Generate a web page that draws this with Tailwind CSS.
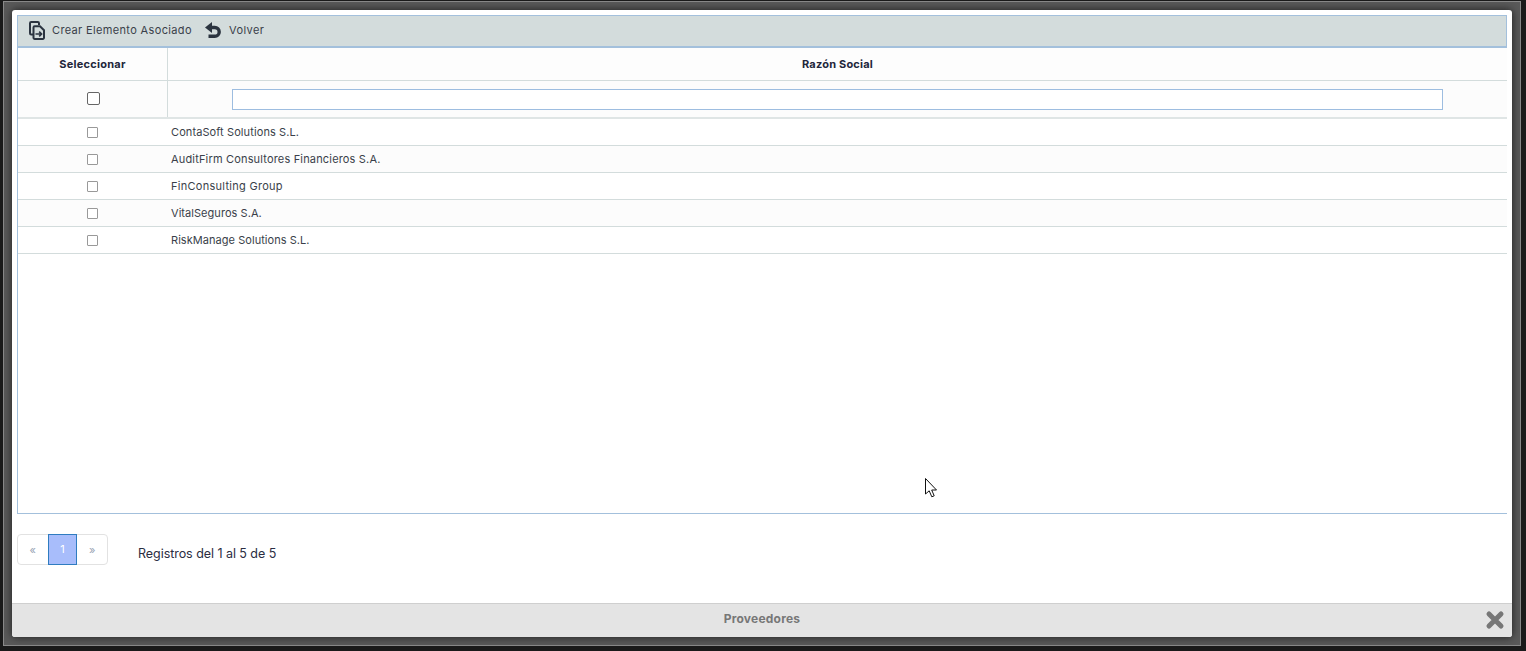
<!DOCTYPE html>
<html lang="es">
<head>
    <meta charset="UTF-8">
    <title>Proveedores</title>
    <script src="https://cdn.jsdelivr.net/npm/@tailwindcss/browser@4"></script>
</head>
<body class="bg-[#1a1a1a] overflow-hidden font-['Inter','Open_Sans',sans-serif] text-[#2b2d42]">
    <!-- Window frame -->
    <div class="ml-[3px] mt-[1px] w-[1518px] h-[645px] bg-[#5a5a5a] border border-[#8a8a8a] pl-[8px] pt-[8px]">
        <!-- Modal -->
        <div class="w-[1500px] h-[627px] bg-white rounded-[3px] shadow-[0_0_8px_#1c1c1c] flex flex-col">
            <div class="pl-[5px] pt-[5px] pr-[5px] h-[593px] flex flex-col">
                <!-- Toolbar -->
                <div class="h-[33px] shrink-0 bg-[#d3dcdc] border border-b-2 border-[#a3c0dc] flex items-center pl-[11px] pb-[2px] text-[11px] text-[#3a3f4a]">
                    <svg class="w-[16px] h-[19px] mr-[7px]" viewBox="0 0 16 19" fill="none" stroke="#2b3440" stroke-width="2">
                        <path d="M10 4V2.200A1.200 1.200 0 0 0 8.800 1H2.200A1.200 1.200 0 0 0 1 2.200v10A1.200 1.200 0 0 0 2.200 13.400H4.500"/>
                        <path d="M4.500 6.400A1.200 1.200 0 0 1 5.700 5.200H11l4 4v7.600a1.200 1.200 0 0 1-1.200 1.200H5.700a1.200 1.200 0 0 1-1.200-1.200Z"/>
                        <path d="M6.500 13h6M10.200 10.600L12.600 13l-2.400 2.400" stroke-width="1.600"/>
                    </svg>
                    <span class="w-[153px] tracking-[0.35px]">Crear Elemento Asociado</span>
                    <svg class="w-[16px] h-[17px] mr-[8px]" viewBox="0 0 16 17" fill="none" stroke="#2b3440">
                        <path d="M5 5.500H9.800a4.400 4.400 0 0 1 0 8.800H3.500" stroke-width="3.400"/>
                        <path d="M7 0V11L0 5.500Z" fill="#2b3440" stroke="none"/>
                    </svg>
                    <span class="tracking-[0.4px]">Volver</span>
                </div>
                <!-- Grid -->
                <div class="flex-1 border-l border-b border-[#a3c0dc]">
                    <div class="grid grid-cols-[150px_1fr] h-[33px] bg-[#fdfdfd] border-b border-[#d3dcdc] text-[11px] font-bold text-[#22263a] items-center text-center">
                        <div class="h-full border-r border-[#d3dcdc] flex items-center justify-center tracking-[0.25px]">Seleccionar</div>
                        <div class="tracking-[0.2px]">Razón Social</div>
                    </div>
                    <div class="grid grid-cols-[150px_1fr] h-[38px] bg-[#fcfcfc] border-b-2 border-[#dfe5e5]">
                        <div class="border-r border-[#d3dcdc] flex items-center justify-center pb-[2px] pl-[2px]">
                            <input type="checkbox" class="appearance-none w-[13px] h-[13px] bg-white border border-[#666] rounded-[2px]">
                        </div>
                        <div class="pl-[64px] pt-[8px]">
                            <input type="text" class="block w-[1211px] h-[21px] bg-white border border-[#9dbde0]">
                        </div>
                    </div>
                    <div id="rows" class="text-[11px] text-[#3a3f4a]">
                        <div class="grid grid-cols-[150px_1fr] h-[27px] bg-white border-b border-[#d3dcdc] items-center">
                            <div class="flex justify-center pr-[2px]"><span class="w-[11px] h-[11px] bg-white border border-[#999] rounded-[1px]"></span></div>
                            <div class="pl-[3px] tracking-[0.1px]">ContaSoft Solutions S.L.</div>
                        </div>
                        <div class="grid grid-cols-[150px_1fr] h-[27px] bg-[#fcfcfc] border-b border-[#d3dcdc] items-center">
                            <div class="flex justify-center pr-[2px]"><span class="w-[11px] h-[11px] bg-white border border-[#999] rounded-[1px]"></span></div>
                            <div class="pl-[3px] tracking-[0.17px]">AuditFirm Consultores Financieros S.A.</div>
                        </div>
                        <div class="grid grid-cols-[150px_1fr] h-[27px] bg-white border-b border-[#d3dcdc] items-center">
                            <div class="flex justify-center pr-[2px]"><span class="w-[11px] h-[11px] bg-white border border-[#999] rounded-[1px]"></span></div>
                            <div class="pl-[3px] tracking-[0.28px]">FinConsulting Group</div>
                        </div>
                        <div class="grid grid-cols-[150px_1fr] h-[27px] bg-[#fcfcfc] border-b border-[#d3dcdc] items-center">
                            <div class="flex justify-center pr-[2px]"><span class="w-[11px] h-[11px] bg-white border border-[#999] rounded-[1px]"></span></div>
                            <div class="pl-[3px] tracking-[0.05px]">VitalSeguros S.A.</div>
                        </div>
                        <div class="grid grid-cols-[150px_1fr] h-[27px] bg-white border-b border-[#d3dcdc] items-center">
                            <div class="flex justify-center pr-[2px]"><span class="w-[11px] h-[11px] bg-white border border-[#999] rounded-[1px]"></span></div>
                            <div class="pl-[3px] tracking-[0.05px]">RiskManage Solutions S.L.</div>
                        </div>
                    </div>
                </div>
                <!-- Pagination -->
                <div class="h-[89px] shrink-0 pt-[20px] flex items-start">
                    <div class="flex h-[31px] w-[91px] border border-[#e2e2e2] rounded-[4px] text-[11px] text-[#9aa5b5] items-center relative">
                        <span class="w-[30px] text-center pt-[2px]">«</span>
                        <span class="w-[30px] -my-px h-[31px] bg-[#a8bdfb] border border-[#2f7cc0] text-white flex items-center justify-center">1</span>
                        <span class="w-[30px] text-center pt-[2px]">»</span>
                    </div>
                    <div class="ml-[30px] mt-[11px] text-[12.5px] tracking-[-0.05px] text-[#2b2d42]">Registros del 1 al 5 de 5</div>
                </div>
            </div>
            <!-- Footer -->
            <div class="h-[34px] bg-[#e4e4e4] border-t border-[#cfcfcf] rounded-b-[3px] flex items-center justify-center relative pb-[3px] text-[12px] tracking-[0.22px] font-bold text-[#777]">
                Proveedores
                <svg class="absolute right-[7px] top-[6px] w-[20px] h-[20px]" viewBox="0 0 20 20">
                    <path d="M4 4L16 16M16 4L4 16" stroke="#777" stroke-width="5" stroke-linecap="round"/>
                </svg>
            </div>
        </div>
    </div>
    <!-- Mouse pointer -->
    <svg class="absolute left-[925px] top-[478px] w-[13px] h-[20px]" viewBox="0 0 13 20">
        <path d="M0.500 0.500V16L4.200 12.800L6.800 18.800L9.200 17.800L6.700 12H11.500Z" fill="#fff" stroke="#111" stroke-width="1"/>
    </svg>
</body>
</html>
